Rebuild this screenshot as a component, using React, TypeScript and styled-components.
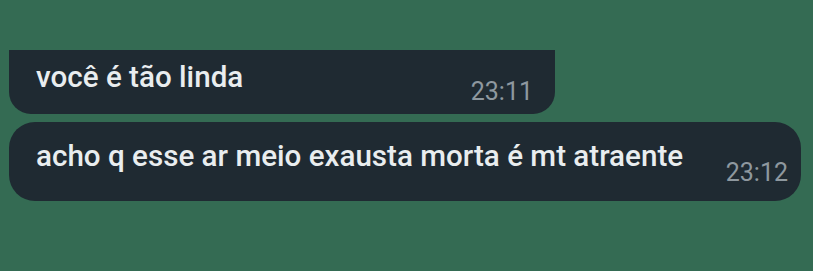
import styled, { createGlobalStyle } from "styled-components";

const GlobalStyle = createGlobalStyle`
  html, body {
    margin: 0;
    padding: 0;
    background-color: #346b53;
  }
  body {
    font-family: Roboto, "Noto Sans", "Liberation Sans", sans-serif;
  }
`;

type Msg = {
  text: string;
  time: string;
  width: number;
  height: number;
  textTop: number;
  timeBottom: number;
  timeRight: number;
  flatTop?: boolean;
};

const messages: Msg[] = [
  {
    text: "você é tão linda",
    time: "23:11",
    width: 546,
    height: 64,
    textTop: 10,
    timeBottom: 8,
    timeRight: 22,
    flatTop: true,
  },
  {
    text: "acho q esse ar meio exausta morta é mt atraente",
    time: "23:12",
    width: 792,
    height: 79,
    textTop: 17,
    timeBottom: 14,
    timeRight: 13,
  },
];

export default function App() {
  return (
    <>
      <GlobalStyle />
      <Chat>
        {messages.map((m) => (
          <Bubble
            key={m.time}
            $width={m.width}
            $height={m.height}
            $flatTop={m.flatTop}
          >
            <Text $top={m.textTop}>{m.text}</Text>
            <Time $bottom={m.timeBottom} $right={m.timeRight}>
              {m.time}
            </Time>
          </Bubble>
        ))}
      </Chat>
    </>
  );
}

const Chat = styled.div`
  display: flex;
  flex-direction: column;
  align-items: flex-start;
  gap: 8px;
  padding: 50px 0 0 9px;
  height: 271px;
  box-sizing: border-box;
  overflow: hidden;
`;

const Bubble = styled.div<{ $width: number; $height: number; $flatTop?: boolean }>`
  display: flex;
  justify-content: space-between;
  box-sizing: border-box;
  width: ${(p) => p.$width}px;
  height: ${(p) => p.$height}px;
  padding-left: 27px;
  background-color: #1f2a32;
  border-radius: ${(p) => (p.$flatTop ? "0 0 22px 22px" : "26px")};
`;

const Text = styled.span<{ $top: number }>`
  align-self: flex-start;
  padding-top: ${(p) => p.$top}px;
  font-size: 29.6px;
  line-height: 34px;
  font-weight: 500;
  color: #e9edef;
  white-space: nowrap;
`;

const Time = styled.span<{ $bottom: number; $right: number }>`
  align-self: flex-end;
  padding-bottom: ${(p) => p.$bottom}px;
  padding-right: ${(p) => p.$right}px;
  font-size: 25px;
  line-height: 28px;
  color: #8e989f;
  white-space: nowrap;
`;
